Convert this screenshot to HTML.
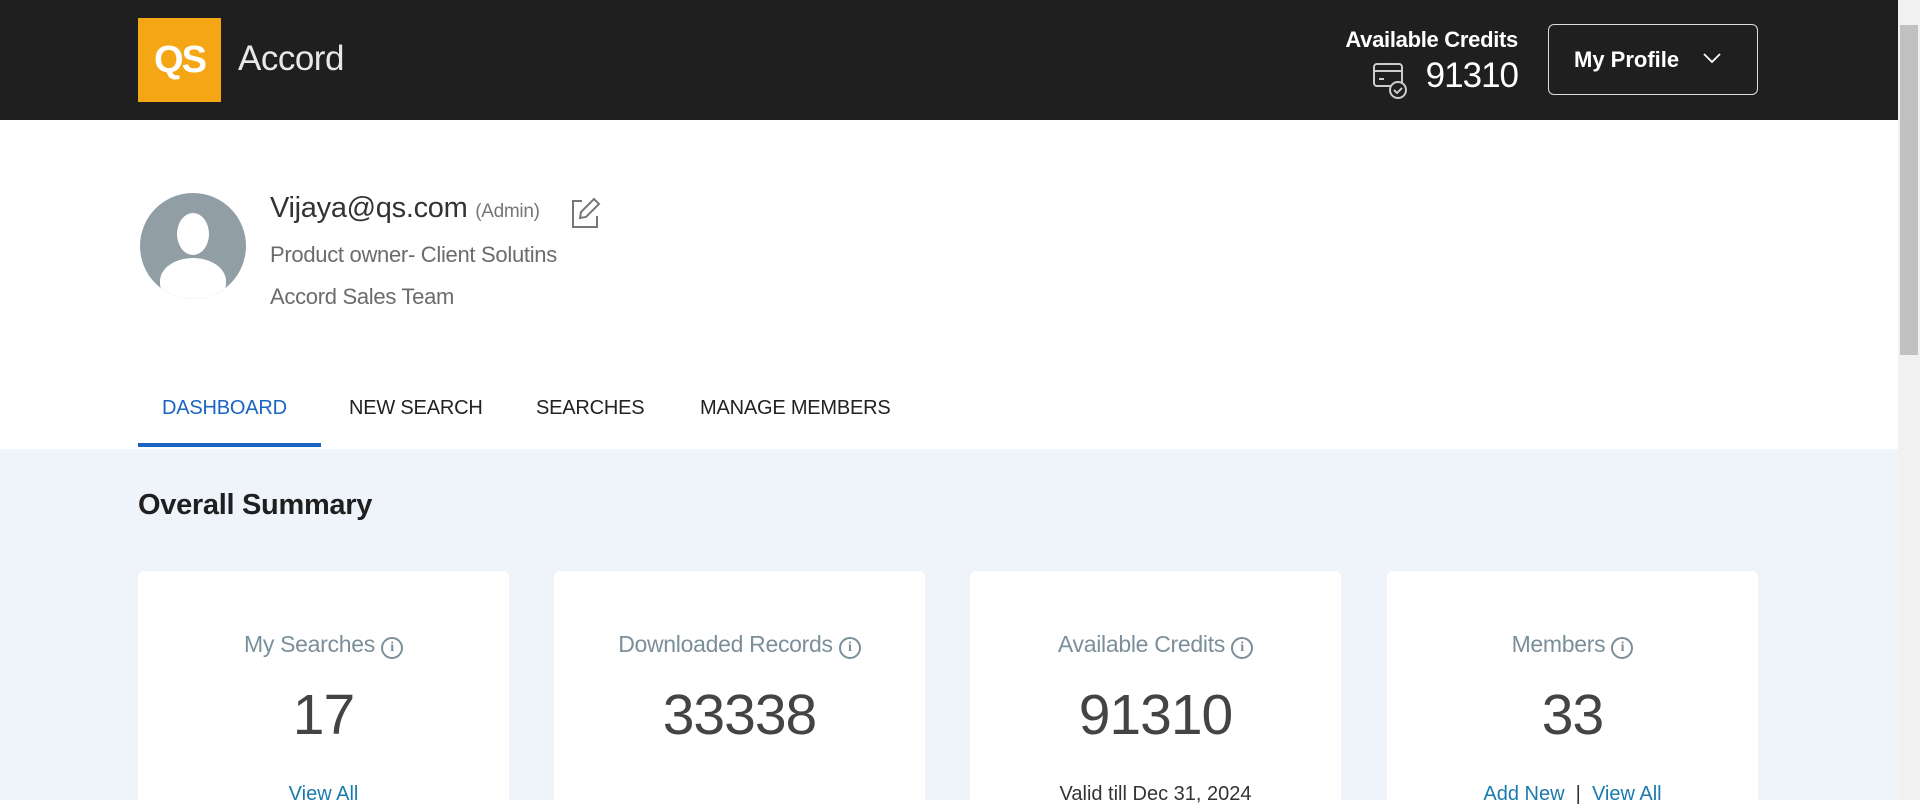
<!DOCTYPE html>
<html><head><meta charset="utf-8"><style>
*{margin:0;padding:0;box-sizing:border-box}
body{width:1920px;height:800px;overflow:hidden;font-family:"Liberation Sans",sans-serif;background:#fff;position:relative}
.abs{position:absolute}
header{position:absolute;left:0;top:0;width:1898px;height:120px;background:#1f1f1f}
.logo{left:138px;top:18px;width:83px;height:84px;background:#f5a614;color:#fff;font-weight:bold;font-size:38px;text-align:center;line-height:84px;letter-spacing:-2px}
.acc{left:238px;top:39px;color:#e8e8e8;font-size:35px;letter-spacing:-0.5px}
.crl{left:1300px;width:218px;text-align:right;top:27px;color:#fff;font-weight:bold;font-size:22px;letter-spacing:-0.3px}
.crn{left:1420px;width:98px;text-align:right;top:56px;color:#fff;font-size:35px;letter-spacing:-1px}
.prof{left:1548px;top:24px;width:210px;height:71px;border:1px solid #ddd;border-radius:6px;color:#fff;font-weight:bold;font-size:22px;padding:22px 0 0 25px}
.scroll{left:1898px;top:0;width:22px;height:800px;background:#f1f1f1}
.thumb{left:1900px;top:25px;width:18px;height:330px;background:#c1c1c1}
.avatar{left:140px;top:193px;width:106px;height:106px;border-radius:50%;background:#919ea6;overflow:hidden}
.name{left:270px;top:192px;font-size:29px;color:#333;letter-spacing:-0.3px}
.name span{font-size:19px;color:#777}
.l2{left:270px;top:242px;font-size:22px;color:#6b6b6b;letter-spacing:-0.3px}
.l3{left:270px;top:284px;font-size:22px;color:#6b6b6b;letter-spacing:-0.3px}
.tab{top:397px;font-size:20px;color:#222;letter-spacing:-0.2px}
.gray{left:0;top:449px;width:1898px;height:351px;background:#eff3fa}
.os{left:138px;top:489px;font-size:29px;font-weight:bold;color:#1f1f1f;letter-spacing:-0.3px}
.card{top:571px;width:371px;height:240px;background:#fff;border-radius:6px;text-align:center}
.ct{position:absolute;top:60px;left:0;right:0;font-size:23px;color:#7b8f9a;letter-spacing:-0.3px}
.ct i{display:inline-block;width:22px;height:22px;border:2px solid #7b8f9a;border-radius:50%;font-style:normal;font-weight:bold;font-size:14px;line-height:18px;vertical-align:1px;font-family:"Liberation Serif",serif}
.cn{position:absolute;top:111px;left:0;right:0;font-size:57px;color:#444;letter-spacing:-1px}
.cl{position:absolute;top:212px;left:0;right:0;font-size:20px;color:#1a7ab0}
</style></head><body>
<header></header>
<div class="abs logo">QS</div>
<div class="abs acc">Accord</div>
<div class="abs crl">Available Credits</div>
<svg class="abs" style="left:1372px;top:62px" width="36" height="38" viewBox="0 0 36 38" fill="none" stroke="#ccc" stroke-width="2"><rect x="2" y="2" width="28" height="22" rx="3"/><line x1="2" y1="9" x2="30" y2="9"/><line x1="7" y1="17" x2="12" y2="17"/><circle cx="26" cy="28" r="8" fill="#1f1f1f"/><path d="M22 28l3 3 5-5"/></svg>
<div class="abs crn">91310</div>
<div class="abs prof">My Profile <svg style="margin-left:18px;vertical-align:3px" width="18" height="11" viewBox="0 0 18 11" fill="none" stroke="#fff" stroke-width="1.8"><path d="M1 1l8 8 8-8"/></svg></div>
<div class="abs scroll"></div><div class="abs thumb"></div>
<div class="abs avatar"><div class="abs" style="left:37px;top:20px;width:32px;height:42px;border-radius:50%;background:#fff"></div><div class="abs" style="left:20px;top:65px;width:66px;height:46px;border-radius:50% 50% 45% 45%;background:#fff"></div></div>
<div class="abs name">Vijaya@qs.com <span>(Admin)</span></div>
<svg class="abs" style="left:570px;top:196px" width="32" height="34" viewBox="0 0 32 34" fill="none" stroke="#777" stroke-width="2"><path d="M12 5H3v26h24V20"/><path d="M24 3l5 5-13 13-6 1 1-6z"/></svg>
<div class="abs l2">Product owner- Client Solutins</div>
<div class="abs l3">Accord Sales Team</div>
<div class="abs tab" style="left:162px;color:#1a64c4">DASHBOARD</div>
<div class="abs tab" style="left:349px">NEW SEARCH</div>
<div class="abs tab" style="left:536px">SEARCHES</div>
<div class="abs tab" style="left:700px">MANAGE MEMBERS</div>
<div class="abs" style="left:138px;top:443px;width:183px;height:4px;background:#1a64c4"></div>
<div class="abs gray"></div>
<div class="abs os">Overall Summary</div>
<div class="abs card" style="left:138px"><div class="ct">My Searches <i>i</i></div><div class="cn">17</div><div class="cl">View All</div></div>
<div class="abs card" style="left:554px"><div class="ct">Downloaded Records <i>i</i></div><div class="cn">33338</div></div>
<div class="abs card" style="left:970px"><div class="ct">Available Credits <i>i</i></div><div class="cn">91310</div><div class="cl" style="color:#333">Valid till Dec 31, 2024</div></div>
<div class="abs card" style="left:1387px"><div class="ct">Members <i>i</i></div><div class="cn">33</div><div class="cl">Add New <span style="color:#333">&nbsp;|&nbsp;</span> View All</div></div>
</body></html>
